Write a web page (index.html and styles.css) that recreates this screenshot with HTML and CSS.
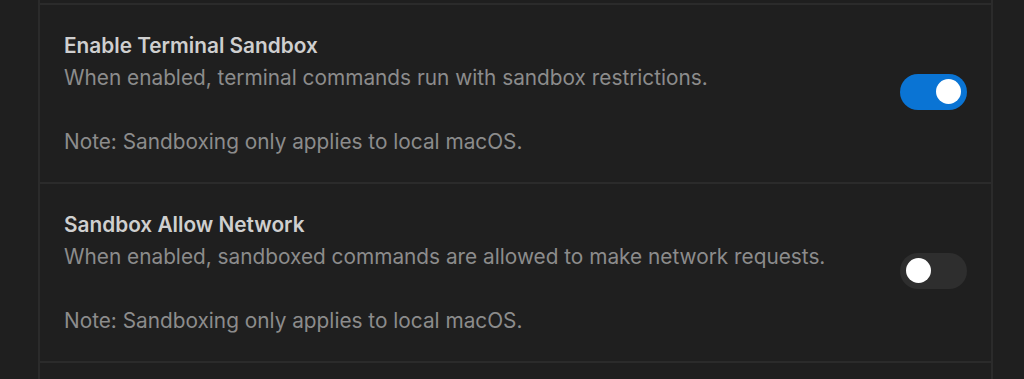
FILE: index.html
```html
<!DOCTYPE html>
<html lang="en">
<head>
<meta charset="utf-8">
<title>Settings</title>
<link rel="stylesheet" href="styles.css">
</head>
<body>
<div class="list">
  <div class="stub stub-top"></div>
  <div class="row">
    <div class="text">
      <div class="title">Enable Terminal Sandbox</div>
      <div class="desc">When enabled, terminal commands run with sandbox restrictions.</div>
      <div class="desc note">Note: Sandboxing only applies to local macOS.</div>
    </div>
    <div class="toggle on" role="switch" aria-checked="true"><span class="knob"></span></div>
  </div>
  <div class="row">
    <div class="text">
      <div class="title">Sandbox Allow Network</div>
      <div class="desc">When enabled, sandboxed commands are allowed to make network requests.</div>
      <div class="desc note">Note: Sandboxing only applies to local macOS.</div>
    </div>
    <div class="toggle" role="switch" aria-checked="false"><span class="knob"></span></div>
  </div>
  <div class="stub stub-bottom"></div>
</div>
</body>
</html>
```

FILE: styles.css
```css
html, body {
  margin: 0;
  padding: 0;
  background: #1f1f1f;
  height: 100%;
  overflow: hidden;
}
body {
  font-family: Inter, "Noto Sans", "Liberation Sans", sans-serif;
  -webkit-font-smoothing: antialiased;
}
.list {
  margin-left: 38px;
  width: 951px;
  border-left: 2px solid #2b2b2b;
  border-right: 2px solid #2b2b2b;
}
.stub-top {
  height: 3px;
  border-bottom: 2px solid #2b2b2b;
}
.stub-bottom {
  height: 16px;
}
.row {
  height: 177px;
  box-sizing: content-box;
  border-bottom: 2px solid #2b2b2b;
  display: flex;
  align-items: center;
  justify-content: space-between;
  padding: 0 24px;
}
.text {
  display: flex;
  flex-direction: column;
  margin-top: 1px;
}
.title {
  font-size: 20.8px;
  line-height: 32px;
  font-weight: 600;
  color: #cfcfcf;
}
.desc {
  font-size: 20.8px;
  line-height: 32px;
  color: #8c8c8c;
}
.note {
  margin-top: 32px;
}
.toggle {
  width: 67px;
  height: 36px;
  border-radius: 18px;
  background: #2e2e2e;
  display: flex;
  align-items: center;
  padding: 0 6px;
  box-sizing: border-box;
  margin-bottom: 4px;
}
.toggle.on {
  background: #0a74d4;
  justify-content: flex-end;
}
.knob {
  width: 25px;
  height: 25px;
  border-radius: 50%;
  background: #ffffff;
}
```
